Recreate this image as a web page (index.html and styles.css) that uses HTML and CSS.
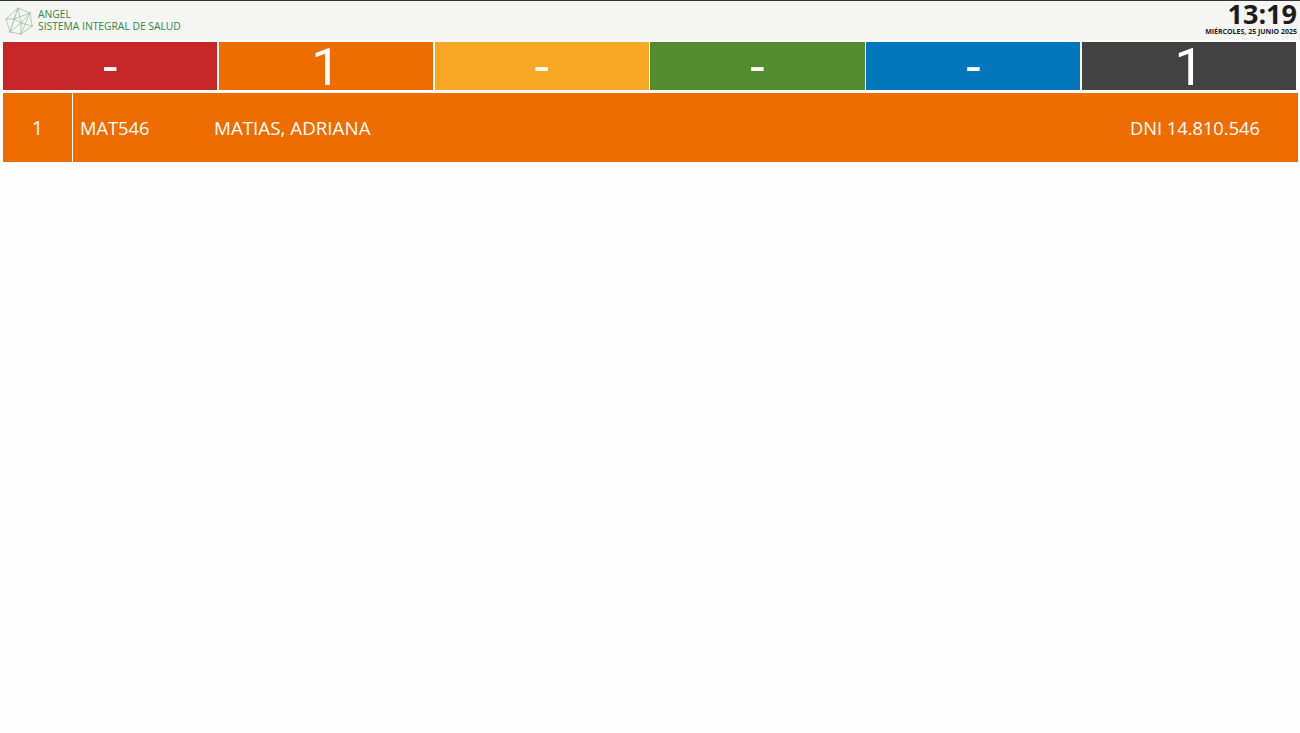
FILE: index.html
```html
<!DOCTYPE html>
<html lang="es">
<head>
<meta charset="utf-8">
<title>Angel - Sistema Integral de Salud</title>
<link rel="stylesheet" href="styles.css">
</head>
<body>
<header class="top">
  <div class="brand">
    <svg class="logo" viewBox="0 0 28 28" width="28" height="28" fill="none" stroke="#a9c9a9" stroke-width="0.9">
      <path d="M13 1 25 6 27 19 16 27 5 25 1 12Z"/>
      <path d="M13 1 9 12 1 12M9 12 5 25M9 12 16 16 16 27M16 16 27 19M16 16 25 6M13 1 16 16M9 12 25 6M5 25 16 16M13 1 5 25M25 6 16 27"/>
      <g fill="#a9c9a9" stroke="none">
        <circle cx="13" cy="1.5" r="1"/><circle cx="25" cy="6" r="1"/><circle cx="27" cy="19" r="1"/>
        <circle cx="16" cy="27" r="1"/><circle cx="5" cy="25" r="1"/><circle cx="1.5" cy="12" r="1"/>
        <circle cx="9" cy="12" r="1"/><circle cx="16" cy="16" r="1"/>
      </g>
    </svg>
    <div class="brand-text">
      <div>ANGEL</div>
      <div>SISTEMA INTEGRAL DE SALUD</div>
    </div>
  </div>
  <div class="clock">
    <div class="time">13:19</div>
    <div class="date">MIÉRCOLES, 25 JUNIO 2025</div>
  </div>
</header>
<section class="tiles">
  <div class="tile red">-</div>
  <div class="tile orange">1</div>
  <div class="tile yellow">-</div>
  <div class="tile green">-</div>
  <div class="tile blue">-</div>
  <div class="tile dark">1</div>
</section>
<section class="row">
  <div class="pos">1</div>
  <div class="code">MAT546</div>
  <div class="name">MATIAS, ADRIANA</div>
  <div class="dni">DNI 14.810.546</div>
</section>
</body>
</html>
```
FILE: styles.css
```css
html, body { margin: 0; padding: 0; }
body {
  background: #fefefe;
  height: 733px;
  overflow: hidden;
  font-family: "Open Sans", "Noto Sans", sans-serif;
  color: #fff;
}
.top {
  box-sizing: border-box;
  height: 40px;
  border-top: 1px solid #333;
  background: #f5f5f3;
  display: flex;
  justify-content: space-between;
  padding: 0 3px 0 5px;
}
.brand { display: flex; align-items: center; gap: 5px; }
.logo { display: block; margin-top: 1px; }
.brand-text {
  font-size: 10.3px;
  line-height: 12px;
  color: #2f8a43;
  margin-top: -1px;
}
.clock { text-align: right; color: #1c1c1c; }
.time {
  font-size: 27px;
  font-weight: 700;
  line-height: 25px;
}
.date {
  font-size: 7px;
  font-weight: 700;
  line-height: 9px;
  margin-top: 1px;
}
.tiles {
  display: flex;
  gap: 1.5px;
  margin: 2px 3.7px 0 3px;
}
.tile {
  flex: 1 1 0;
  height: 48px;
  font-family: Roboto, "Open Sans", sans-serif;
  font-size: 52px;
  line-height: 52px;
  text-align: center;
}
.red { background: #c62828; }
.orange { background: #ef6c00; }
.yellow { background: #f9a825; }
.green { background: #558b2f; }
.blue { background: #0277bd; }
.dark { background: #424242; }
.row {
  display: flex;
  align-items: center;
  height: 69px;
  margin: 3px 2px 0 3px;
  background: #ef6c00;
  font-size: 18.3px;
}
.pos {
  box-sizing: border-box;
  width: 70px;
  height: 100%;
  line-height: 69px;
  text-align: center;
  font-size: 20px;
  border-right: 1px solid #fff;
}
.code { width: 134px; padding-left: 7px; box-sizing: border-box; flex: none; }
.name { flex: 1; padding-left: 7px; font-size: 18.8px; }
.dni { padding-right: 38px; }
```
